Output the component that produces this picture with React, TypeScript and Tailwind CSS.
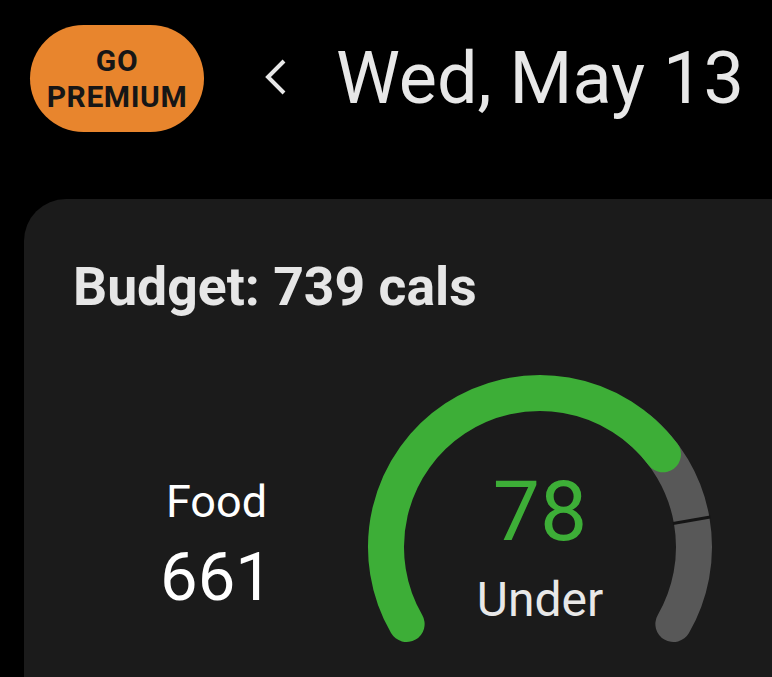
import React from 'react';

const CX = 180;
const CY = 175;
const R = 154;

function pt(deg: number, r: number) {
  const a = (deg * Math.PI) / 180;
  return [CX + r * Math.sin(a), CY - r * Math.cos(a)];
}

function arc(from: number, to: number) {
  const [x1, y1] = pt(from, R);
  const [x2, y2] = pt(to, R);
  const large = to - from > 180 ? 1 : 0;
  return `M ${x1} ${y1} A ${R} ${R} 0 ${large} 1 ${x2} ${y2}`;
}

function Gauge() {
  const [t1x, t1y] = pt(80, R - 19);
  const [t2x, t2y] = pt(80, R + 19);
  return (
    <div className="relative w-[360px] h-[320px]">
      <svg width="360" height="320" viewBox="0 0 360 320" className="absolute inset-0">
        <path d={arc(40, 120)} fill="none" stroke="#585858" strokeWidth="36" strokeLinecap="round" />
        <path d={arc(-120, 53)} fill="none" stroke="#3dae37" strokeWidth="36" strokeLinecap="round" />
        <line x1={t1x} y1={t1y} x2={t2x} y2={t2y} stroke="#151515" strokeWidth="3" />
      </svg>
      <div className="absolute left-0 right-0 top-[98px] flex flex-col items-center">
        <span className="text-[84px] leading-none text-[#3dae37]">78</span>
        <span className="mt-[22px] text-[48px] leading-none text-[#e8e8e8]">Under</span>
      </div>
    </div>
  );
}

export default function App() {
  return (
    <div className="h-[677px] w-[772px] overflow-hidden bg-black font-['Roboto',sans-serif]">
      <header className="flex items-center pl-[30px] pt-[25px]">
        <button className="flex h-[107px] w-[174px] flex-col items-center justify-center rounded-full bg-[#e8852d] text-[30px] font-bold leading-[1.2] tracking-[0.6px] text-[#161616]">
          <span>GO</span>
          <span>PREMIUM</span>
        </button>
        <svg width="24" height="40" viewBox="0 0 24 40" className="ml-[60px]">
          <polyline points="20,2 4,18 20,34" fill="none" stroke="#e8e8e8" strokeWidth="4" />
        </svg>
        <h1 className="ml-[48px] text-[72px] leading-none text-[#e8e8e8]">Wed, May 13</h1>
      </header>

      <section className="ml-[24px] mt-[67px] h-[520px] rounded-tl-[42px] bg-[#1b1b1b] pl-[49px] pt-[61px]">
        <h2 className="text-[53.5px] font-bold leading-none text-[#e6e6e6]">Budget: 739 cals</h2>
        <div className="mt-[58px] flex items-start">
          <div className="mt-[107px] flex w-[287px] flex-col items-center">
            <span className="text-[45px] leading-none text-white">Food</span>
            <span className="mt-[20px] text-[67px] leading-none text-white">661</span>
          </div>
          <Gauge />
        </div>
      </section>
    </div>
  );
}
